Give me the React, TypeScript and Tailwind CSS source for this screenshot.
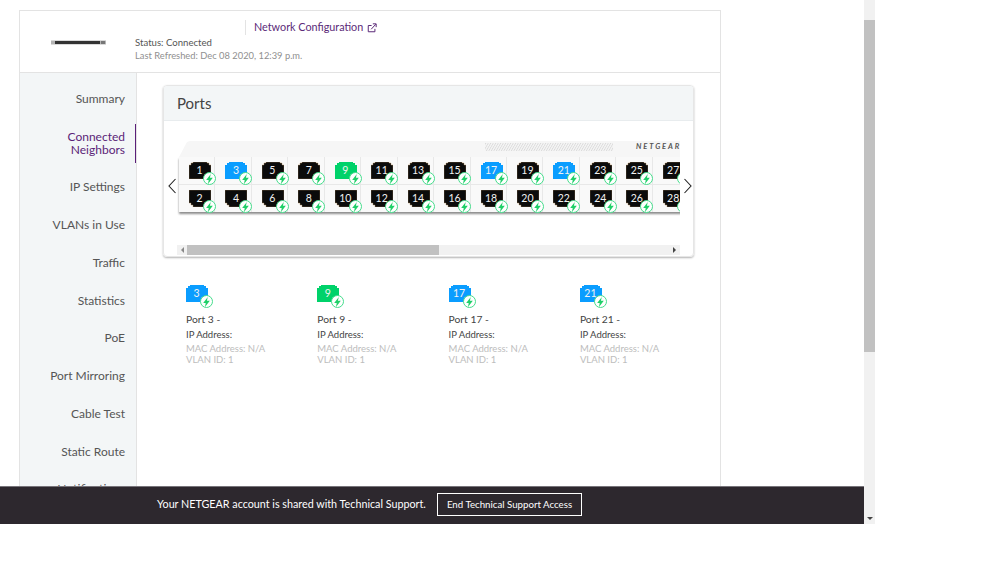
import React, { FC, ReactElement } from 'react';

const sideItems: string[] = ['Summary', 'Connected Neighbors', 'IP Settings', 'VLANs in Use', 'Traffic', 'Statistics', 'PoE', 'Port Mirroring', 'Cable Test', 'Static Route', 'Notifications'];
const topPorts: number[] = [1, 3, 5, 7, 9, 11, 13, 15, 17, 19, 21, 23, 25, 27];
const bottomPorts: number[] = [2, 4, 6, 8, 10, 12, 14, 16, 18, 20, 22, 24, 26, 28];
const details: number[] = [3, 9, 17, 21];

function portColor(n: number): string {
	if (n === 9) return '#00d26a';
	if (n === 3 || n === 17 || n === 21) return '#0a9dff';
	return '#0b0b0b';
}

const PortIcon: FC<{ n: number }> = ({ n }): ReactElement => {
	const isTop = n % 2 === 1;
	const black = portColor(n) === '#0b0b0b';
	return (
		<div className="relative w-[22px] h-[17px] shrink-0">
			<svg width="22" height="17" viewBox="0 0 22 17" className="block">
				<polygon
					fill={portColor(n)}
					stroke={black ? '#b08d62' : 'none'}
					strokeWidth={black ? 0.4 : 0}
					points={isTop ? '4,0 18,0 18,1 20,1 20,3 22,3 22,17 0,17 0,3 2,3 2,1 4,1' : '0,0 22,0 22,13 20,13 20,15 18,15 18,17 4,17 4,15 2,15 2,13 0,13'}
				/>
			</svg>
			<span className="absolute inset-0 flex items-center justify-center text-[10.5px] leading-none text-[#f2f2f2] pr-[1px]">{n}</span>
			<div className="absolute left-[14px] top-[10px] w-[13px] h-[13px] rounded-full bg-white border border-[#45dd8c] flex items-center justify-center">
				<svg width="7" height="10" viewBox="0 0 7 10">
					<polygon points="4.8,0 0.2,5.9 2.7,5.9 2,10 6.8,3.7 3.9,3.7" fill="#1fd068" />
				</svg>
			</div>
		</div>
	);
};

const PortRow: FC<{ ports: number[]; extra: string }> = ({ ports, extra }): ReactElement => (
	<div className={`flex ${extra}`}>
		{ports.map(n => (
			<div key={n} className="w-[36.45px] h-[27px] shrink-0 border-r border-[#e8e8e8] bg-[#f9f9f9] pl-[10px] pt-[5px]">
				<PortIcon n={n} />
			</div>
		))}
	</div>
);

const App: FC = (): ReactElement => {
	return (
		<div className="relative w-[999px] h-[562px] bg-white overflow-hidden font-['Lato',sans-serif] text-[#333]">
			<div className="flex h-[524px]">
				<div className="w-[864px] h-[524px] overflow-hidden pl-[19px] pt-[10px]">
					<div className="w-[702px] h-[514px] border border-[#e3e3e3] border-b-0 flex flex-col">
						{/* header */}
						<div className="h-[62px] shrink-0 border-b border-[#e3e3e3] flex">
							<div className="w-[115px] shrink-0 pl-[31px] pt-[29px]">
								<svg width="55" height="5" viewBox="0 0 55 5" className="block">
									<rect x="0" y="0.5" width="55" height="4" fill="#b5b5b5" />
									<rect x="4" y="1" width="45" height="3" fill="#333" />
									<rect x="50" y="1" width="4" height="3" fill="#777" />
								</svg>
							</div>
							<div className="flex flex-col">
								<div className="flex h-[25px] pt-[9px] pl-[110px]">
									<div className="w-px h-[15px] bg-[#e3e3e3] mr-[8px]" />
									<div className="flex items-center h-[15px] gap-[4px] text-[10.8px] text-[#5b2a78]">
										<span>Network Configuration</span>
										<svg width="10" height="10" viewBox="0 0 12 12" fill="none" stroke="#5b2a78" strokeWidth="1.2">
											<path d="M9.5 7v3.5h-8v-7.5h4" />
											<path d="M5 7.5 10.5 1.5M7 1h4v4" />
										</svg>
									</div>
								</div>
								<div className="pt-[1px] text-[9.6px] leading-[12px] text-[#555]">Status: Connected</div>
								<div className="text-[9.35px] leading-[13px] text-[#8f8f8f]">Last Refreshed: Dec 08 2020, 12:39 p.m.</div>
							</div>
						</div>
						{/* body */}
						<div className="flex flex-1 min-h-0">
							<div className="w-[117px] shrink-0 bg-[#f3f6f7] border-r border-[#e3e3e3] pt-[7px] overflow-hidden">
								{sideItems.map(item => {
									const active = item === 'Connected Neighbors';
									return (
										<div key={item} className={`relative flex items-center justify-end pr-[11px] text-right text-[12px] leading-[13px] ${active ? 'h-[50.3px] text-[#5b1f78]' : 'h-[37.75px] text-[#555]'}`}>
											<span className={active ? 'w-[72px]' : ''}>{item}</span>
											{active && <div className="absolute right-[-1px] top-[6px] w-[2px] h-[39px] bg-[#5b1f78]" />}
										</div>
									);
								})}
							</div>
							<div className="flex-1 pl-[26px] pt-[12px]">
								<div className="w-[531px] h-[172px] rounded-[4px] border border-[#e6e6e6] shadow-[0_1px_2px_rgba(0,0,0,0.3)] overflow-hidden">
									<div className="h-[35px] bg-[#f3f6f7] border-b border-[#e8ecee] pl-[13px] flex items-center text-[15px] text-[#444]">Ports</div>
									<div className="flex h-[134px]">
										<div className="w-[13px] shrink-0 flex items-center justify-end pb-[4px]">
											<svg width="10" height="16" viewBox="0 0 10 16" fill="none" stroke="#222" strokeWidth="1.1">
												<path d="M8.5 1 2 8l6.5 7" />
											</svg>
										</div>
										<div className="w-[503px] shrink-0 flex flex-col overflow-hidden">
											<div className="flex-1 pt-[20px] pl-[2px] overflow-hidden">
												<div className="relative w-[530px] h-[16px]">
													<svg width="530" height="16" viewBox="0 0 530 16" className="block">
														<polygon points="0,16 8,1 11,0 530,0 530,16" fill="#f6f6f6" />
														<defs>
															<pattern id="hatch" width="2.5" height="8" patternUnits="userSpaceOnUse" patternTransform="skewX(-30)">
																<rect width="1" height="8" fill="#dadada" />
															</pattern>
														</defs>
														<rect x="306" y="2" width="128" height="8" fill="url(#hatch)" />
													</svg>
													<span className="absolute left-[457px] top-[1px] text-[7.5px] leading-[10px] font-bold italic tracking-[1.9px] text-[#555]">NETGEAR</span>
												</div>
												<div className="w-[530px] shadow-[0_2px_2px_rgba(0,0,0,0.45)] bg-[#f9f9f9]">
													<PortRow ports={topPorts} extra="border-b border-[#e8e8e8]" />
													<PortRow ports={bottomPorts} extra="" />
												</div>
											</div>
											<div className="h-[10px] shrink-0 bg-[#f1f1f1] flex items-center">
												<div className="w-[10px] shrink-0 flex justify-center">
													<div className="w-0 h-0 border-y-[3px] border-y-transparent border-r-[3px] border-r-[#888]" />
												</div>
												<div className="w-[252px] h-[10px] bg-[#c1c1c1]" />
												<div className="flex-1 flex justify-end pr-[4px]">
													<div className="w-0 h-0 border-y-[3px] border-y-transparent border-l-[3px] border-l-[#444]" />
												</div>
											</div>
										</div>
										<div className="flex-1 flex items-center pb-[4px] pl-[3px]">
											<svg width="10" height="16" viewBox="0 0 10 16" fill="none" stroke="#222" strokeWidth="1.1">
												<path d="M1.5 1 8 8l-6.5 7" />
											</svg>
										</div>
									</div>
								</div>
								<div className="flex pl-[23px] pt-[28px]">
									{details.map(n => (
										<div key={n} className="w-[131.3px] shrink-0">
											<PortIcon n={n} />
											<div className="pt-[10px] text-[10.3px] leading-[14px] text-[#444]">Port {n} -</div>
											<div className="pt-[3px] text-[9.5px] leading-[12px] text-[#444]">IP Address:</div>
											<div className="pt-[2px] text-[9.5px] leading-[11px] text-[#bdbdbd]">MAC Address: N/A</div>
											<div className="text-[9.5px] leading-[11px] text-[#bdbdbd]">VLAN ID: 1</div>
										</div>
									))}
								</div>
							</div>
						</div>
					</div>
				</div>
				{/* page scrollbar */}
				<div className="w-[11px] h-[524px] bg-[#f1f1f1] flex flex-col items-center pt-[20px]">
					<div className="w-full h-[332px] bg-[#c1c1c1]" />
					<div className="flex-1 flex items-end pb-[4px]">
						<div className="w-0 h-0 border-x-[3px] border-x-transparent border-t-[3px] border-t-[#444]" />
					</div>
				</div>
			</div>
			{/* support banner */}
			<div className="absolute left-0 top-[486px] w-[864px] h-[38px] bg-[#2d282e] border-t border-[#77747a] flex items-center gap-[11px] pl-[157px] pb-[2px] text-white">
				<span className="w-[269px] shrink-0 whitespace-nowrap text-[10.75px]">Your NETGEAR account is shared with Technical Support.</span>
				<button className="w-[145px] h-[23px] border border-white text-[9.7px] text-white">End Technical Support Access</button>
			</div>
		</div>
	);
};

export default App;
